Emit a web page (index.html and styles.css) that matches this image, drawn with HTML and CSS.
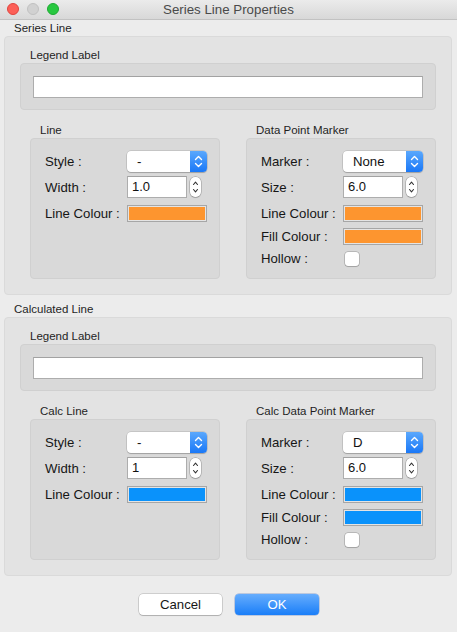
FILE: index.html
```html
<!DOCTYPE html>
<html>
<head>
<meta charset="utf-8">
<link rel="stylesheet" href="styles.css">
</head>
<body>
<div class="window">
  <div class="titlebar">
    <div class="lights">
      <span class="light red"></span>
      <span class="light gray"></span>
      <span class="light green"></span>
    </div>
    <div class="title">Series Line Properties</div>
  </div>

  <div class="content">
    <div class="section-title">Series Line</div>
    <div class="group">
      <div class="sub-title">Legend Label</div>
      <div class="legend"><div class="textfield wide"></div></div>
      <div class="cols">
        <div class="col">
          <div class="sub-title">Line</div>
          <div class="panel">
            <div class="row r1"><span class="lbl">Style :</span>
              <div class="popup"><span class="pv">-</span><span class="arrow"><svg width="17" height="21" viewBox="0 0 17 21"><path d="M5.5 8.5 L8.5 5.5 L11.5 8.5 M5.5 12.5 L8.5 15.5 L11.5 12.5" fill="none" stroke="#fff" stroke-width="1.4" stroke-linecap="round" stroke-linejoin="round"/></svg></span></div>
            </div>
            <div class="row r2"><span class="lbl">Width :</span>
              <div class="textfield num">1.0</div>
              <div class="stepper"><svg width="11" height="20" viewBox="0 0 11 20"><path d="M3.5 7.5 L5.5 5.2 L7.5 7.5 M3.5 12.5 L5.5 14.8 L7.5 12.5" fill="none" stroke="#333" stroke-width="1.1" stroke-linecap="round" stroke-linejoin="round"/></svg></div>
            </div>
            <div class="row r3"><span class="lbl">Line Colour :</span><div class="swatch orange"></div></div>
          </div>
        </div>
        <div class="col">
          <div class="sub-title">Data Point Marker</div>
          <div class="panel">
            <div class="row r1"><span class="lbl">Marker :</span>
              <div class="popup"><span class="pv">None</span><span class="arrow"><svg width="17" height="21" viewBox="0 0 17 21"><path d="M5.5 8.5 L8.5 5.5 L11.5 8.5 M5.5 12.5 L8.5 15.5 L11.5 12.5" fill="none" stroke="#fff" stroke-width="1.4" stroke-linecap="round" stroke-linejoin="round"/></svg></span></div>
            </div>
            <div class="row r2"><span class="lbl">Size :</span>
              <div class="textfield num">6.0</div>
              <div class="stepper"><svg width="11" height="20" viewBox="0 0 11 20"><path d="M3.5 7.5 L5.5 5.2 L7.5 7.5 M3.5 12.5 L5.5 14.8 L7.5 12.5" fill="none" stroke="#333" stroke-width="1.1" stroke-linecap="round" stroke-linejoin="round"/></svg></div>
            </div>
            <div class="row r3"><span class="lbl">Line Colour :</span><div class="swatch orange"></div></div>
            <div class="row r4"><span class="lbl">Fill Colour :</span><div class="swatch orange"></div></div>
            <div class="row r5"><span class="lbl">Hollow :</span><div class="checkbox"></div></div>
          </div>
        </div>
      </div>
    </div>

    <div class="section-title second">Calculated Line</div>
    <div class="group">
      <div class="sub-title">Legend Label</div>
      <div class="legend"><div class="textfield wide"></div></div>
      <div class="cols">
        <div class="col">
          <div class="sub-title">Calc Line</div>
          <div class="panel">
            <div class="row r1"><span class="lbl">Style :</span>
              <div class="popup"><span class="pv">-</span><span class="arrow"><svg width="17" height="21" viewBox="0 0 17 21"><path d="M5.5 8.5 L8.5 5.5 L11.5 8.5 M5.5 12.5 L8.5 15.5 L11.5 12.5" fill="none" stroke="#fff" stroke-width="1.4" stroke-linecap="round" stroke-linejoin="round"/></svg></span></div>
            </div>
            <div class="row r2"><span class="lbl">Width :</span>
              <div class="textfield num">1</div>
              <div class="stepper"><svg width="11" height="20" viewBox="0 0 11 20"><path d="M3.5 7.5 L5.5 5.2 L7.5 7.5 M3.5 12.5 L5.5 14.8 L7.5 12.5" fill="none" stroke="#333" stroke-width="1.1" stroke-linecap="round" stroke-linejoin="round"/></svg></div>
            </div>
            <div class="row r3"><span class="lbl">Line Colour :</span><div class="swatch blue"></div></div>
          </div>
        </div>
        <div class="col">
          <div class="sub-title">Calc Data Point Marker</div>
          <div class="panel">
            <div class="row r1"><span class="lbl">Marker :</span>
              <div class="popup"><span class="pv">D</span><span class="arrow"><svg width="17" height="21" viewBox="0 0 17 21"><path d="M5.5 8.5 L8.5 5.5 L11.5 8.5 M5.5 12.5 L8.5 15.5 L11.5 12.5" fill="none" stroke="#fff" stroke-width="1.4" stroke-linecap="round" stroke-linejoin="round"/></svg></span></div>
            </div>
            <div class="row r2"><span class="lbl">Size :</span>
              <div class="textfield num">6.0</div>
              <div class="stepper"><svg width="11" height="20" viewBox="0 0 11 20"><path d="M3.5 7.5 L5.5 5.2 L7.5 7.5 M3.5 12.5 L5.5 14.8 L7.5 12.5" fill="none" stroke="#333" stroke-width="1.1" stroke-linecap="round" stroke-linejoin="round"/></svg></div>
            </div>
            <div class="row r3"><span class="lbl">Line Colour :</span><div class="swatch blue"></div></div>
            <div class="row r4"><span class="lbl">Fill Colour :</span><div class="swatch blue"></div></div>
            <div class="row r5"><span class="lbl">Hollow :</span><div class="checkbox"></div></div>
          </div>
        </div>
      </div>
    </div>

    <div class="buttons">
      <div class="btn cancel">Cancel</div>
      <div class="btn ok">OK</div>
    </div>
  </div>
</div>
</body>
</html>
```

FILE: styles.css
```css
* { box-sizing: border-box; }
html, body { margin: 0; padding: 0; }
body {
  width: 457px;
  height: 632px;
  background: #ececec;
  font-family: "Liberation Sans", Arial, sans-serif;
  color: #1d1d1d;
  overflow: hidden;
}
.window { width: 457px; height: 632px; }

.titlebar {
  position: relative;
  height: 20px;
  background: linear-gradient(#ebebeb, #d8d8d8);
  border-bottom: 1px solid #c2c2c2;
  display: flex;
  align-items: center;
  justify-content: center;
}
.lights {
  position: absolute;
  left: 7px;
  top: 3px;
  display: flex;
  gap: 8px;
}
.light {
  width: 12px;
  height: 12px;
  border-radius: 50%;
  display: block;
}
.light.red { background: #fc5f57; border: 1px solid #e0443e; }
.light.gray { background: #d1d1d1; border: 1px solid #c1c1c1; }
.light.green { background: #28c840; border: 1px solid #1eaa33; }
.title {
  font-size: 13.3px;
  color: #4a4a4a;
  line-height: 19px;
  margin-top: -1px;
}

.content { display: flex; flex-direction: column; }

.section-title {
  height: 16px;
  line-height: 16px;
  padding-left: 14px;
  font-size: 11.5px;
  color: #1f1f1f;
}
.section-title.second { margin-top: 6px; }

.group {
  margin: 0 5px 0 4px;
  height: 259px;
  background: #e3e3e3;
  border: 1px solid #dadada;
  border-radius: 4px;
  padding: 10px 15px 15px 15px;
}

.sub-title {
  height: 16px;
  line-height: 16px;
  padding-left: 10px;
  font-size: 11.5px;
  color: #1f1f1f;
}

.legend {
  height: 47px;
  background: #d9d9d9;
  border: 1px solid #d0d0d0;
  border-radius: 4px;
  padding: 12px 12px 0 12px;
}

.textfield {
  height: 22px;
  background: #fff;
  border: 1px solid #adadad;
  border-top-color: #a2a2a2;
}
.textfield.wide { width: 390px; }
.textfield.num {
  width: 60px;
  margin-left: 0;
  font-size: 13px;
  line-height: 20px;
  padding-left: 4px;
  color: #111;
}

.cols {
  margin-top: 12px;
  padding-left: 10px;
  display: flex;
  gap: 26px;
}
.col { width: 190px; }

.panel {
  height: 141px;
  background: #d9d9d9;
  border: 1px solid #d0d0d0;
  border-radius: 4px;
  padding: 12px 0 0 14px;
  display: flex;
  flex-direction: column;
}

.row { display: flex; align-items: center; }
.r1 { height: 21px; }
.r2 { height: 22px; margin-top: 4px; }
.r3 { height: 23px; margin-top: 4px; }
.r4 { height: 22px; }
.r5 { height: 23px; }

.lbl {
  width: 82px;
  flex: none;
  font-size: 13.2px;
  color: #161616;
  white-space: nowrap;
}

.popup {
  width: 80px;
  height: 21px;
  background: #fff;
  border-radius: 4px;
  box-shadow: 0 0 0 0.5px rgba(0,0,0,0.18), 0 1px 1px rgba(0,0,0,0.18);
  display: flex;
  align-items: center;
  overflow: hidden;
}
.pv {
  flex: 1;
  font-size: 13.2px;
  padding-left: 10px;
  color: #111;
}
.arrow {
  width: 17px;
  height: 21px;
  flex: none;
  background: linear-gradient(#5aa8fd, #1a78f7);
  display: block;
}
.arrow svg { display: block; }

.stepper {
  width: 11px;
  height: 20px;
  margin-left: 3px;
  background: #fff;
  border-radius: 5px;
  box-shadow: 0 0 0 0.5px rgba(0,0,0,0.3), 0 1px 1px rgba(0,0,0,0.12);
}
.stepper svg { display: block; }

.swatch {
  width: 80px;
  height: 17px;
  border: 1px solid #a6a6a6;
  box-shadow: inset 0 0 0 1px #e4e4e4;
}
.swatch.orange { background: #fd952f; }
.swatch.blue { background: #0a92fb; }

.checkbox {
  width: 14px;
  height: 14px;
  margin-left: 2px;
  background: #fff;
  border-radius: 3px;
  box-shadow: 0 0 0 0.5px rgba(0,0,0,0.3), 0 1px 1px rgba(0,0,0,0.12);
}

.buttons {
  margin-top: 18px;
  display: flex;
  justify-content: center;
  gap: 13px;
  padding-left: 1px;
}
.btn {
  height: 21px;
  border-radius: 4px;
  font-size: 13.2px;
  line-height: 21px;
  text-align: center;
}
.btn.cancel {
  width: 83px;
  background: #fff;
  color: #161616;
  box-shadow: 0 0 0 0.5px rgba(0,0,0,0.25), 0 1px 1px rgba(0,0,0,0.15);
}
.btn.ok {
  width: 84px;
  background: linear-gradient(#66adfd, #1a7ef8);
  color: #fff;
  box-shadow: 0 0 0 0.5px rgba(0,60,170,0.4);
}
```
